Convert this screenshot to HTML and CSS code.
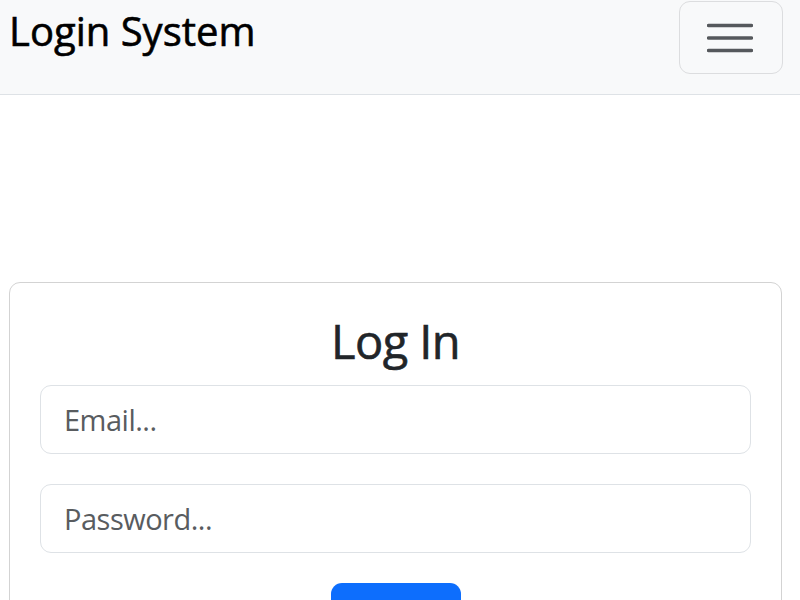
FILE: index.html
```html
<!DOCTYPE html>
<html lang="en">
<head>
<meta charset="utf-8">
<title>Login System</title>
<link rel="stylesheet" href="styles.css">
</head>
<body>
<nav class="navbar">
  <a class="brand" href="#">Login System</a>
  <button class="toggler" type="button" aria-label="Toggle navigation">
    <svg width="46" height="34" viewBox="0 0 46 34" aria-hidden="true">
      <path d="M1.5 4.5h43M1.5 17h43M1.5 29.5h43" stroke="#55585c" stroke-width="3.4" stroke-linecap="round"/>
    </svg>
  </button>
</nav>
<main class="page">
  <form class="card">
    <h1 class="title">Log In</h1>
    <input class="field" type="email" placeholder="Email...">
    <input class="field" type="password" placeholder="Password...">
    <button class="submit" type="submit">Log In</button>
  </form>
</main>
</body>
</html>
```

FILE: styles.css
```css
* { box-sizing: border-box; }
html, body { margin: 0; padding: 0; }
body {
  font-family: "Open Sans", "Noto Sans", "Liberation Sans", sans-serif;
  background: #fff;
  color: #212529;
}
.navbar {
  height: 95px;
  background: #f8f9fa;
  border-bottom: 1px solid #dee2e6;
  display: flex;
  align-items: flex-start;
  justify-content: space-between;
  padding: 0 17px 0 9px;
}
.brand {
  font-size: 40px;
  font-weight: 400;
  line-height: 48px;
  margin-top: 7px;
  color: #000;
  text-decoration: none;
  letter-spacing: 0;
  -webkit-text-stroke: 0.6px #000;
}
.toggler {
  margin-top: 1px;
  width: 104px;
  height: 73px;
  border: 1px solid #dcdddf;
  border-radius: 11px;
  background: transparent;
  display: flex;
  align-items: center;
  justify-content: center;
  padding: 0;
}
.toggler svg { display: block; margin-left: -2px; }
.page {
  padding: 187px 18px 0 9px;
}
.card {
  border: 1px solid #d3d3d3;
  border-radius: 11px;
  padding: 29px 30px 30px;
  display: flex;
  flex-direction: column;
  align-items: center;
  gap: 30px;
  background: #fff;
}
.title {
  font-size: 47px;
  font-weight: 400;
  line-height: 58px;
  margin: 0 0 -15px;
  letter-spacing: -0.6px;
  color: #212529;
  -webkit-text-stroke: 0.6px #212529;
}
.field {
  width: 100%;
  height: 69px;
  border: 1px solid #dee2e6;
  border-radius: 11px;
  padding: 0 23px;
  font-family: inherit;
  font-size: 29px;
  letter-spacing: -0.5px;
  color: #212529;
  background: #fff;
}
.field::placeholder { color: #595c5f; }
.submit {
  width: 130px;
  height: 66px;
  border: none;
  border-radius: 11px;
  background: #0d6efd;
  color: #fff;
  font-family: inherit;
  font-size: 29px;
  line-height: 40px;
  padding: 22px 0 4px;
}
```
